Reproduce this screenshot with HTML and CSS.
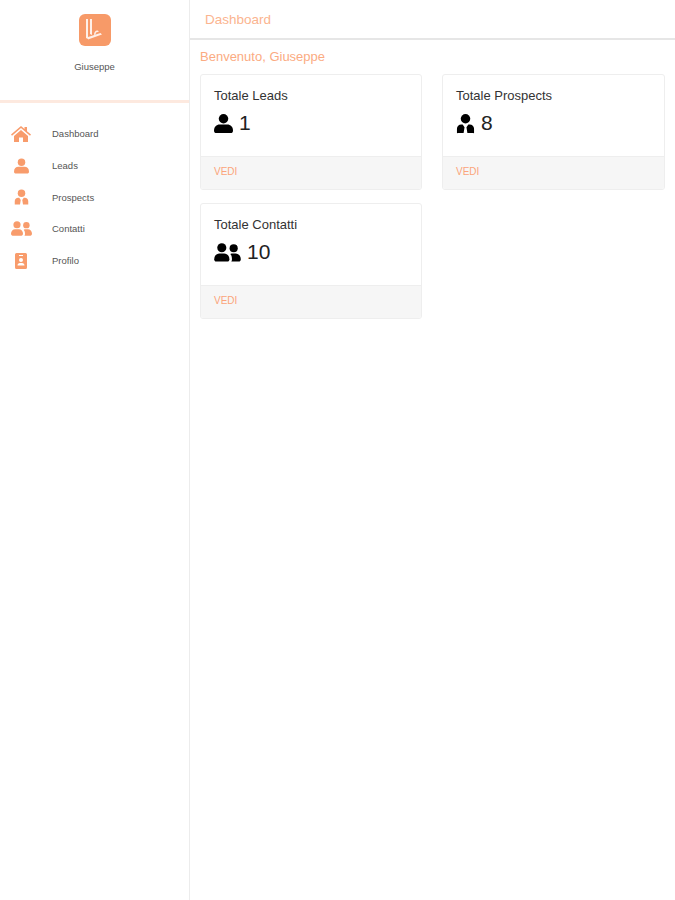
FILE: index.html
```html
<!DOCTYPE html>
<html lang="it">
<head>
<meta charset="utf-8">
<title>Dashboard</title>
<link rel="stylesheet" href="styles.css">
</head>
<body>
<svg class="defs" width="0" height="0" aria-hidden="true">
  <symbol id="i-user" viewBox="0 0 20 20"><circle cx="10" cy="5" r="5"/><path d="M0 17.5C0 13.5 2.5 11 6 11h8c3.500 0 6 2.500 6 6.500C20 19 19 20 17.500 20h-15C1 20 0 19 0 17.500z"/></symbol>
  <symbol id="i-pro" viewBox="0 0 20 20"><circle cx="10" cy="5" r="5"/><path d="M1 20v-4.500C1 13 3 11 5.500 11H7l2 3-1 6H2a1 1 0 0 1-1 0zM19 20v-4.500C19 13 17 11 14.500 11H13l-2 3 1 6h6a1 1 0 0 0 1 0z"/></symbol>
  <symbol id="i-users" viewBox="0 0 28 20"><circle cx="8" cy="5" r="4.800"/><circle cx="20.500" cy="5.500" r="4.300"/><path d="M0 17c0-3.500 2.500-6 5.500-6h5c3 0 5.500 2.500 5.500 6 0 1.500-1 2.500-2 2.500H2C1 19.500 0 18.500 0 17z"/><path d="M17 11.500c1-.5 1.500-.5 2-.5h3.500c3 0 5.500 2.500 5.500 6 0 1.500-1 2.500-2 2.500h-8c.5-.8.700-1.600.700-2.500 0-2.200-.5-4-1.700-5.500z"/></symbol>
</svg>
<div class="app">
  <aside class="sidebar">
    <div class="brand">
      <svg class="logo" viewBox="0 0 32 32" aria-hidden="true"><rect width="32" height="32" rx="6" fill="#f79a68"/><path d="M7 5v19l2 1V5zM11 5v15l2 1V5zM9 25.500l14-5-1.500-1.500L9 23zM15 21c0-3 1.500-4.500 3-4.500 1 0 1.500.5 2 1l-2 .8c-.8-.3-1.300.5-1.300 2z" fill="#fff" opacity=".85"/></svg>
      <div class="brand-name">Giuseppe</div>
    </div>
    <nav class="nav">
      <a class="nav-item"><span class="nav-icon"><svg class="home" viewBox="0 0 20 16"><path d="M10 0l3.500 3V1h2.500v4.200L20 8.600l-1 1.100L10 2 1 9.700 0 8.600zM3 10l7-6 7 6v6h-5v-4.500H8V16H3z"/></svg></span>Dashboard</a>
      <a class="nav-item"><span class="nav-icon"><svg class="ic14"><use href="#i-user"/></svg></span>Leads</a>
      <a class="nav-item"><span class="nav-icon"><svg class="ic14"><use href="#i-pro"/></svg></span>Prospects</a>
      <a class="nav-item"><span class="nav-icon"><svg class="ic-users-s"><use href="#i-users"/></svg></span>Contatti</a>
      <a class="nav-item"><span class="nav-icon"><svg class="ic-prof" viewBox="0 0 12 16"><path fill-rule="evenodd" d="M1.500 0h9A1.500 1.500 0 0 1 12 1.500v13a1.500 1.500 0 0 1-1.500 1.500h-9A1.500 1.500 0 0 1 0 14.500v-13A1.500 1.500 0 0 1 1.500 0zM4 2v1h4V2zM6 5a2 2 0 1 0 0 4 2 2 0 0 0 0-4zM2.500 12.500h7C9.500 11 8.500 10 7 10H5c-1.500 0-2.500 1-2.500 2.500z"/></svg></span>Profilo</a>
    </nav>
  </aside>
  <main class="main">
    <header class="topbar">Dashboard</header>
    <div class="content">
      <h1 class="welcome">Benvenuto, Giuseppe</h1>
      <div class="cards">
        <section class="card">
          <div class="card-body">
            <h2 class="card-title">Totale Leads</h2>
            <div class="card-value"><svg class="vi"><use href="#i-user"/></svg>1</div>
          </div>
          <div class="card-footer">VEDI</div>
        </section>
        <section class="card">
          <div class="card-body">
            <h2 class="card-title">Totale Prospects</h2>
            <div class="card-value"><svg class="vi"><use href="#i-pro"/></svg>8</div>
          </div>
          <div class="card-footer">VEDI</div>
        </section>
        <section class="card">
          <div class="card-body">
            <h2 class="card-title">Totale Contatti</h2>
            <div class="card-value"><svg class="vi-wide"><use href="#i-users"/></svg>10</div>
          </div>
          <div class="card-footer">VEDI</div>
        </section>
      </div>
    </div>
  </main>
</div>
</body>
</html>
```
FILE: styles.css
```css
* { box-sizing: border-box; }
html, body { margin: 0; height: 100%; }
body { font-family: "Liberation Sans", Arial, sans-serif; background: #fff; color: #333; }
.defs { position: absolute; }
.app { display: flex; height: 900px; }
.sidebar { width: 190px; flex: none; border-right: 1px solid #ececec; }
.brand { height: 103px; border-bottom: 3px solid #fde9df; padding-top: 14px; display: flex; flex-direction: column; align-items: center; }
.logo { width: 32px; height: 32px; display: block; }
.brand-name { margin-top: 15px; font-size: 9.500px; line-height: 12px; color: #555; }
.nav { padding-top: 15px; display: flex; flex-direction: column; }
.nav-item { height: 31.700px; display: flex; align-items: center; font-size: 9.500px; color: #555; }
.nav-icon { width: 42px; flex: none; padding-left: 0; padding-right: 0; display: flex; align-items: center; justify-content: center; fill: #f89c6c; margin-right: 10px; }
.nav-icon { width: 42px; margin-right: 10px; padding-right: 0; justify-content: flex-start; padding-left: 11px; }
.home { width: 20px; height: 16px; margin-left: 0; }
.ic14 { width: 15px; height: 16px; margin-left: 3px; }
.ic-users-s { width: 21px; height: 15px; }
.ic-prof { width: 12px; height: 16px; margin-left: 4px; }
.main { flex: 1; min-width: 0; display: flex; flex-direction: column; }
.topbar { height: 40px; border-bottom: 2px solid #e6e6e6; padding: 12px 0 0 15px; font-size: 13.500px; line-height: 15px; color: #fbb48f; }
.content { padding: 9px 10px 0; }
.welcome { margin: 0 0 10px; font-size: 13px; line-height: 15px; font-weight: 400; color: #fbab82; }
.cards { display: grid; grid-template-columns: 222px 223px; column-gap: 20px; row-gap: 13px; }
.card { height: 116px; border: 1px solid #eeeeee; border-radius: 3px; display: flex; flex-direction: column; background: #fff; overflow: hidden; }
.card-body { flex: 1; padding: 13px 13px 0; }
.card-title { margin: 0 0 8px; font-size: 13px; line-height: 15px; font-weight: 400; color: #333; }
.card-value { display: flex; align-items: center; gap: 6px; font-size: 21px; line-height: 24px; color: #222; }
.vi { width: 19px; height: 21px; fill: #000; }
.vi-wide { width: 27px; height: 19px; fill: #000; }
.card-footer { height: 33px; background: #f6f6f6; border-top: 1px solid #eeeeee; padding: 9px 13px 0; font-size: 10px; line-height: 12px; color: #fba47a; }
```
